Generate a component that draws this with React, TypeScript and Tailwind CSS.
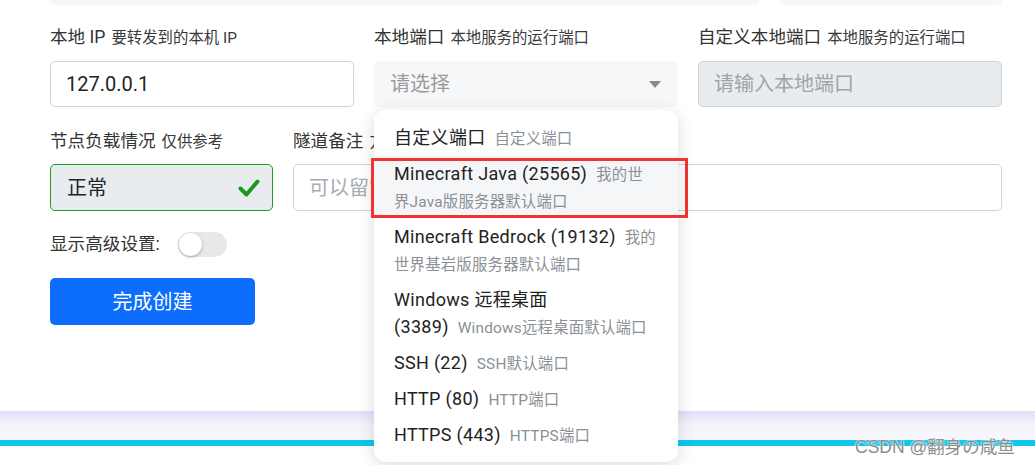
import React from "react";

const font = { fontFamily: "Roboto, 'Noto Sans CJK SC', sans-serif" };

function Label({ main, sub }: { main: string; sub: string }) {
  return (
    <div className="h-[26px] leading-[26px] text-[17.6px] text-[#333] whitespace-nowrap">
      {main}
      <span className="ml-[6px] text-[15.4px] text-[#3a3a3a]">{sub}</span>
    </div>
  );
}

const items: { main: string; sub: string; active?: boolean }[] = [
  { main: "自定义端口", sub: "自定义端口" },
  { main: "Minecraft Java (25565)", sub: "我的世界Java版服务器默认端口", active: true },
  { main: "Minecraft Bedrock (19132)", sub: "我的世界基岩版服务器默认端口" },
  { main: "Windows 远程桌面 (3389)", sub: "Windows远程桌面默认端口" },
  { main: "SSH (22)", sub: "SSH默认端口" },
  { main: "HTTP (80)", sub: "HTTP端口" },
  { main: "HTTPS (443)", sub: "HTTPS端口" },
];

export default function App() {
  return (
    <div className="relative w-[1035px] h-[465px] overflow-hidden bg-white" style={font}>
      <div className="ml-[50px] w-[952px]">
        {/* top remnants */}
        <div className="grid grid-cols-12 gap-x-[20px]">
          <div className="col-span-9 h-[5px] rounded-b-[6px] bg-[#f6f7f9]" />
          <div className="col-span-3 h-[5px] rounded-b-[6px] bg-[#f6f7f9]" />
        </div>

        {/* row 1 */}
        <div className="grid grid-cols-12 gap-x-[20px] mt-[19px]">
          <div className="col-span-4">
            <Label main="本地 IP" sub="要转发到的本机 IP" />
            <div className="mt-[11px] h-[46px] rounded-[5px] border border-[#ced4da] bg-white px-[15px] flex items-center text-[20px] text-[#212529]">
              127.0.0.1
            </div>
          </div>
          <div className="col-span-4">
            <Label main="本地端口" sub="本地服务的运行端口" />
            <div className="mt-[11px] h-[46px] rounded-[5px] bg-[#f6f7f9] pl-[16px] pr-[16px] flex items-center justify-between text-[20px] text-[#9a9a9a]">
              <span>请选择</span>
              <svg width="12" height="7" viewBox="0 0 12 7" className="mr-[1px]">
                <path d="M0 0 L12 0 L6 7 Z" fill="#8a8a8a" />
              </svg>
            </div>
          </div>
          <div className="col-span-4">
            <Label main="自定义本地端口" sub="本地服务的运行端口" />
            <div className="mt-[11px] h-[46px] rounded-[5px] border border-[#ced4da] bg-[#e9ecef] px-[15px] flex items-center text-[20px] text-[#a0a4a8]">
              请输入本地端口
            </div>
          </div>
        </div>

        {/* row 2 */}
        <div className="grid grid-cols-12 gap-x-[20px] mt-[21px]">
          <div className="col-span-3">
            <Label main="节点负载情况" sub="仅供参考" />
            <div className="mt-[10px] h-[47px] rounded-[5px] border border-[#1f9f1f] bg-[#e9ecef] pl-[16px] pr-[12px] flex items-center justify-between text-[20px] text-[#212529]">
              <span>正常</span>
              <svg width="22" height="20" viewBox="0 0 22 20">
                <path d="M2.5 10.5 L8.5 16.5 L19.5 3.5" fill="none" stroke="#1a9a1a" strokeWidth="4" strokeLinecap="round" strokeLinejoin="round" />
              </svg>
            </div>
          </div>
          <div className="col-span-9">
            <Label main="隧道备注" sub="方便区分隧道用途" />
            <div className="mt-[10px] h-[47px] rounded-[5px] border border-[#ced4da] bg-white px-[15px] flex items-center text-[20px] text-[#a8acb0]">
              可以留空，方便区分隧道
            </div>
          </div>
        </div>

        {/* toggle */}
        <div className="mt-[20px] h-[26px] flex items-center text-[17.6px] text-[#333]">
          <span className="w-[128px] whitespace-nowrap">显示高级设置:</span>
          <div className="w-[49px] h-[25px] rounded-full bg-[#e8e8e8] flex items-center pl-[1px]">
            <div className="w-[23px] h-[23px] rounded-full bg-white shadow-[0_1px_3px_rgba(0,0,0,0.3)]" />
          </div>
        </div>

        {/* button */}
        <div className="mt-[21px] w-[205px] h-[47px] rounded-[5px] bg-[#0d6efd] flex items-center justify-center text-[20px] text-white">
          完成创建
        </div>
      </div>

      {/* bottom band */}
      <div className="mt-[86px] h-[29px] bg-gradient-to-b from-[#e2dff8] via-[#f4f4fc] to-[#f7f7fd]" />
      <div className="h-[6px] bg-[#10c6ee]" />

      {/* dropdown */}
      <div className="absolute left-[374px] top-[110px] w-[304px] rounded-[12px] bg-white pt-[9px] pb-[10px] shadow-[0_4px_18px_rgba(0,0,0,0.14)]">
        {items.map((it, i) => (
          <div
            key={i}
            className={`px-[20px] py-[4.5px] leading-[27px] text-[18px] tracking-[0.3px] text-[#222] ${it.active ? "bg-[#f5f6f8]" : ""}`}
          >
            {it.main}
            <span className="ml-[9px] leading-none text-[15.4px] tracking-[0.2px] text-[#8a9096]">{it.sub}</span>
          </div>
        ))}
      </div>

      {/* red annotation */}
      <div className="absolute left-[371px] top-[158px] w-[317px] h-[60px] border-[3px] border-[#ee3333]" />

      {/* watermark */}
      <div
        className="absolute left-[855px] top-[437px] text-[17.5px] leading-[20px] text-[#8c8c8c]"
        style={{
          fontFamily: "'Liberation Sans', 'Noto Sans CJK SC', sans-serif",
          textShadow: "0 0 2px #fff, 0 0 2px #fff",
        }}
      >
        CSDN @翻身の咸鱼
      </div>
    </div>
  );
}
